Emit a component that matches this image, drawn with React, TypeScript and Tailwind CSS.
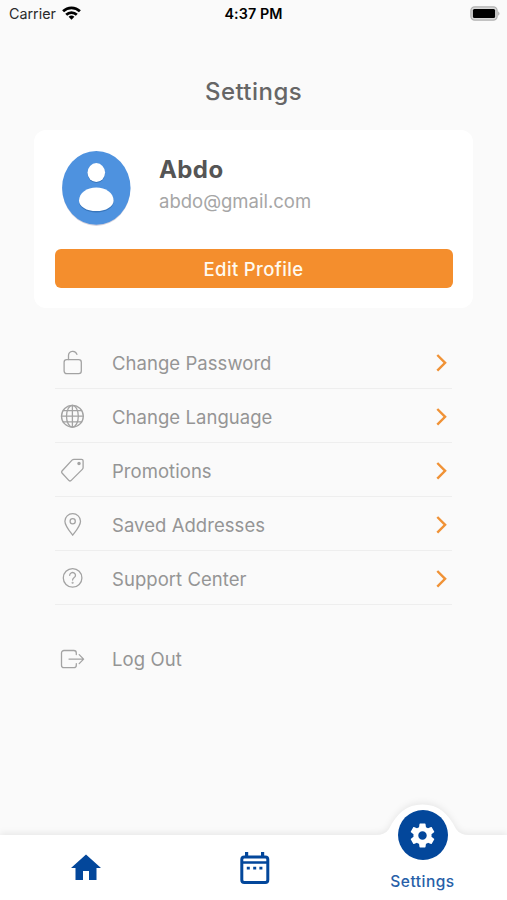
import type { ReactNode } from 'react'

function Icon({ children }: { children: ReactNode }) {
  return (
    <svg
      width="26"
      height="26"
      viewBox="0 0 26 26"
      fill="none"
      stroke="#a3a3a3"
      strokeWidth="1.3"
      strokeLinecap="round"
      strokeLinejoin="round"
      className="ml-[5px] shrink-0"
    >
      {children}
    </svg>
  )
}

const menu = [
  {
    label: 'Change Password',
    icon: (
      <>
        <rect x="4.1" y="9.7" width="17.2" height="14" rx="2.6" />
        <path d="M8.5 9.5V5.4a4.3 4.3 0 0 1 8.4-1" />
      </>
    ),
  },
  {
    label: 'Change Language',
    icon: (
      <>
        <circle cx="12.4" cy="12.2" r="10.9" />
        <ellipse cx="12.4" cy="12.2" rx="5.9" ry="10.9" />
        <path d="M12.4 1.3v21.8M1.5 12.2h21.8M3.2 6.6h18.4M3.2 17.8h18.4" />
      </>
    ),
  },
  {
    label: 'Promotions',
    icon: (
      <>
        <path d="M14 1.3H21.6q1.5 0 1.5 1.5V9.6q0 1-.8 1.8L11 22.6q-1 .9-2 0L2 15q-.9-1 0-2L12 2.1q.8-.8 2-.8Z" />
        <circle cx="19" cy="5.6" r="1.1" fill="#a3a3a3" />
      </>
    ),
  },
  {
    label: 'Saved Addresses',
    icon: (
      <>
        <path d="M12.7 23.2C10.5 20.3 4.9 13.8 4.9 9.2a7.8 7.5 0 0 1 15.6 0C20.5 13.8 14.9 20.3 12.7 23.2Z" />
        <circle cx="12.7" cy="9.2" r="2.6" />
      </>
    ),
  },
  {
    label: 'Support Center',
    icon: (
      <>
        <circle cx="12.6" cy="11.9" r="9.3" />
        <path d="M9.7 9.3a2.9 2.7 0 1 1 4.5 2.2c-1 .7-1.6 1.2-1.6 2.6" />
        <circle cx="12.6" cy="16.8" r="0.4" />
      </>
    ),
  },
]

function StatusBar() {
  return (
    <div className="grid h-7 grid-cols-3 items-center px-[9px] text-black">
      <div className="flex items-center gap-[6px]">
        <span className="text-[14.3px] text-[#2a2a2a]">Carrier</span>
        <svg width="19" height="14" viewBox="0 0 19 14" fill="none" stroke="#000" strokeWidth="2.7" className="-mt-[3px]">
          <path d="M1.1 5.3a12 12 0 0 1 16.8 0" />
          <path d="M4.2 8.7a7.6 7.6 0 0 1 10.6 0" />
          <path d="M9.5 13.7L6.6 10.8a4.2 4.2 0 0 1 5.8 0Z" fill="#000" stroke="none" />
        </svg>
      </div>
      <div className="text-center text-[14.3px] font-semibold tracking-[0.1px]">4:37 PM</div>
      <div className="flex justify-end">
        <svg width="31" height="15" viewBox="0 0 31 15" className="-mr-[3px] -mt-[2px]">
          <rect x="0.9" y="0.9" width="26.2" height="13.2" rx="3.8" fill="#d8d8d8" stroke="#b0b0b0" strokeWidth="1.3" />
          <rect x="2.9" y="2.9" width="22.2" height="9.2" rx="1.5" fill="#000" />
          <path d="M28.2 5.2q2.6 2.3 0 4.6Z" fill="#aaa" />
        </svg>
      </div>
    </div>
  )
}

function ProfileCard() {
  return (
    <section className="mx-[34px] mt-[22px] h-[178px] rounded-xl bg-white px-[20.5px] pt-5">
      <div className="flex">
        <svg width="71" height="77" viewBox="0 0 71 77" className="ml-[6px]">
          <ellipse cx="35.3" cy="38.9" rx="34" ry="37" fill="#d8d3dc" />
          <ellipse cx="35.3" cy="37.9" rx="34.2" ry="36.9" fill="#4e92df" />
          <ellipse cx="35.3" cy="23.4" rx="8.8" ry="9.7" fill="#3876bd" />
          <ellipse cx="35.3" cy="22.6" rx="8.8" ry="9.5" fill="#fff" />
          <path d="M18 52c0-8 8-13.5 17.3-13.5S52.6 44 52.6 52c0 5.8-7.6 10.4-17.3 10.4S18 57.8 18 52Z" fill="#3876bd" />
          <path d="M18 50.7c0-8 8-13.3 17.3-13.3s17.3 5.3 17.3 13.3c0 5.8-7.6 10.4-17.3 10.4S18 56.5 18 50.7Z" fill="#fff" />
        </svg>
        <div className="ml-[27.5px] pt-[4px]">
          <h2 className="text-[24px] font-bold leading-[32px] tracking-[0.4px] text-[#555]">Abdo</h2>
          <p className="text-[18.5px] leading-[30px] text-[#a6a6a6]">abdo@gmail.com</p>
        </div>
      </div>
      <button className="mt-[22px] flex h-[39px] w-full items-center justify-center rounded-[6px] bg-[#f48e2d] pt-[2px] text-[18.5px] font-medium tracking-[0.35px] text-[#fffaf0]">
        Edit Profile
      </button>
    </section>
  )
}

function TabBar() {
  return (
    <nav className="relative h-[100px]">
      {/* White bar with the bump around the active tab */}
      <svg width="507" height="100" viewBox="0 0 507 100" className="absolute inset-0 drop-shadow-[0_-2px_3px_rgba(0,0,0,0.07)]">
        <path d="M0 35H376q9 0 13-6C397 13 407 4.5 422.5 4.5S448 13 456 29q4 6 13 6H507V100H0Z" fill="#fff" />
      </svg>
      <div className="relative grid h-full grid-cols-[170px_168px_169px]">
        <div className="flex justify-center pt-[49.5px]">
          <svg width="36" height="36" viewBox="0 0 24 24" fill="#03479b" className="ml-[2px]">
            <path d="M10 20v-6h4v6h5v-8h3L12 3 2 12h3v8z" />
          </svg>
        </div>
        <div className="flex justify-center pt-[52px]">
          <svg width="30" height="33" viewBox="0 0 30 33" fill="#03479b" className="ml-px">
            <rect x="1.8" y="5" width="26" height="25.5" rx="2.5" fill="none" stroke="#03479b" strokeWidth="3" />
            <path d="M5 0h3.2v5H5zM21 0h3.2v5H21zM2 9.3h26v2.5H2zM6.8 14.8h3v2.8h-3zM13.2 14.8h3v2.8h-3zM19.4 14.8h3v2.8h-3z" />
          </svg>
        </div>
        <div className="flex flex-col items-center pt-[10px]">
          <div className="flex h-[50px] w-[50px] items-center justify-center rounded-full bg-[#03479b]">
            <svg width="29" height="29" viewBox="0 0 24 24" fill="#fff">
              <path d="M19.43 12.98c.04-.32.07-.64.07-.98s-.03-.66-.07-.98l2.11-1.65c.19-.15.24-.42.12-.64l-2-3.46c-.12-.22-.39-.3-.61-.22l-2.49 1c-.52-.4-1.08-.73-1.69-.98l-.38-2.65C14.46 2.18 14.25 2 14 2h-4c-.25 0-.46.18-.49.42l-.38 2.65c-.61.25-1.17.59-1.69.98l-2.49-1c-.23-.09-.49 0-.61.22l-2 3.46c-.13.22-.07.49.12.64l2.11 1.65c-.04.32-.07.65-.07.98s.03.66.07.98l-2.11 1.65c-.19.15-.24.42-.12.64l2 3.46c.12.22.39.3.61.22l2.49-1c.52.4 1.08.73 1.69.98l.38 2.65c.03.24.24.42.49.42h4c.25 0 .46-.18.49-.42l.38-2.65c.61-.25 1.17-.59 1.69-.98l2.49 1c.23.09.49 0 .61-.22l2-3.46c.12-.22.07-.49-.12-.64l-2.11-1.65zM12 15.5c-1.93 0-3.5-1.57-3.5-3.5s1.57-3.5 3.5-3.5 3.5 1.57 3.5 3.5-1.57 3.5-3.5 3.5z" />
            </svg>
          </div>
          <span className="mt-[12px] text-[15.5px] font-medium leading-5 tracking-[0.5px] text-[#2760a8]">Settings</span>
        </div>
      </div>
    </nav>
  )
}

export default function App() {
  return (
    <div className="flex h-[900px] w-[507px] flex-col overflow-hidden bg-[#fafafa] font-['Inter',sans-serif]">
      <StatusBar />
      <h1 className="mt-[48px] text-center text-[24px] font-medium leading-8 tracking-[0.45px] text-[#666]">Settings</h1>
      <ProfileCard />

      <ul className="mx-[55px] mt-[27px]">
        {menu.map((item) => (
          <li key={item.label} className="flex h-[54px] items-center border-b border-[#eeeeee] pt-[3px]">
            <Icon>{item.icon}</Icon>
            <span className="ml-[26px] pt-[2px] text-[18.5px] tracking-[0.05px] text-[#959595]">{item.label}</span>
            <svg width="14" height="20" viewBox="0 0 14 20" fill="none" stroke="#f09236" strokeWidth="2.4" className="ml-auto mr-[4px]">
              <path d="M3.3 2l7.8 7.8-7.8 7.8" />
            </svg>
          </li>
        ))}
      </ul>

      <button className="mx-[55px] mt-[27px] flex h-[54px] items-center">
        <Icon>
          <path d="M16.3 8.5V7a2.5 2.5 0 0 0-2.5-2.5H4A2.5 2.5 0 0 0 1.5 7v12.2A2.5 2.5 0 0 0 4 21.7h9.8a2.5 2.5 0 0 0 2.5-2.5v-1.5M9 13.1h14.5M19.2 8.6l4.4 4.5-4.4 4.5" />
        </Icon>
        <span className="ml-[26px] pt-[2px] text-[18.5px] tracking-[0.1px] text-[#959595]">Log Out</span>
      </button>

      <div className="flex-1" />
      <TabBar />
    </div>
  )
}
